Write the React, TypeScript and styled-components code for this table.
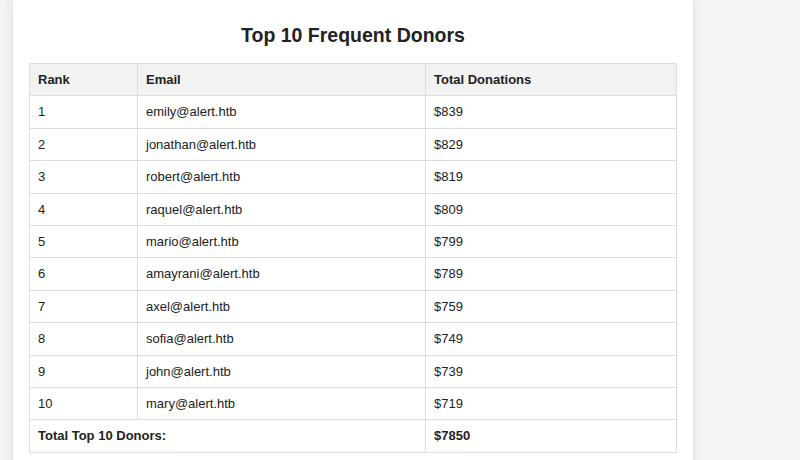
import React from "react";
import styled, { createGlobalStyle } from "styled-components";

const Global = createGlobalStyle`
  html, body { margin: 0; padding: 0; }
  body {
    background: #f4f4f4;
    font-family: Arial, "Liberation Sans", sans-serif;
    font-size: 13px;
    color: #333;
    overflow: hidden;
  }
`;

const Page = styled.div`
  padding: 0 0 0 13px;
  height: 460px;
  overflow: hidden;
`;

const Card = styled.div`
  width: 680px;
  box-sizing: border-box;
  background: #fff;
  padding: 24px 16px 30px;
  box-shadow: 0 0 10px rgba(0, 0, 0, 0.1);
`;

const Title = styled.h2`
  margin: 0 0 17px;
  text-align: center;
  font-size: 19.5px;
  line-height: 22px;
  font-weight: bold;
  color: #222;
`;

const Table = styled.table`
  width: 648px;
  border-collapse: collapse;
  table-layout: fixed;
  font-size: 13px;
`;

const Cell = styled.td<{ $bold?: boolean }>`
  border: 1px solid #ddd;
  padding: 8px;
  line-height: 15.4px;
  text-align: left;
  font-weight: ${(p) => (p.$bold ? "bold" : "normal")};
  color: #222;
`;

const Head = styled.th`
  border: 1px solid #ddd;
  padding: 8px;
  line-height: 15.4px;
  text-align: left;
  background: #f2f2f2;
  font-weight: bold;
  color: #222;
`;

const donors: [number, string, number][] = [
  [1, "emily@alert.htb", 839],
  [2, "jonathan@alert.htb", 829],
  [3, "robert@alert.htb", 819],
  [4, "raquel@alert.htb", 809],
  [5, "mario@alert.htb", 799],
  [6, "amayrani@alert.htb", 789],
  [7, "axel@alert.htb", 759],
  [8, "sofia@alert.htb", 749],
  [9, "john@alert.htb", 739],
  [10, "mary@alert.htb", 719],
];

export default function App() {
  return (
    <>
      <Global />
      <Page>
        <Card>
          <Title>Top 10 Frequent Donors</Title>
          <Table>
            <colgroup>
              <col style={{ width: 108 }} />
              <col style={{ width: 288 }} />
              <col />
            </colgroup>
            <thead>
              <tr>
                <Head>Rank</Head>
                <Head>Email</Head>
                <Head>Total Donations</Head>
              </tr>
            </thead>
            <tbody>
              {donors.map(([r, e, d]) => (
                <tr key={r}>
                  <Cell>{r}</Cell>
                  <Cell>{e}</Cell>
                  <Cell>${d}</Cell>
                </tr>
              ))}
              <tr>
                <Cell $bold colSpan={2}>Total Top 10 Donors:</Cell>
                <Cell $bold>$7850</Cell>
              </tr>
            </tbody>
          </Table>
        </Card>
      </Page>
    </>
  );
}
